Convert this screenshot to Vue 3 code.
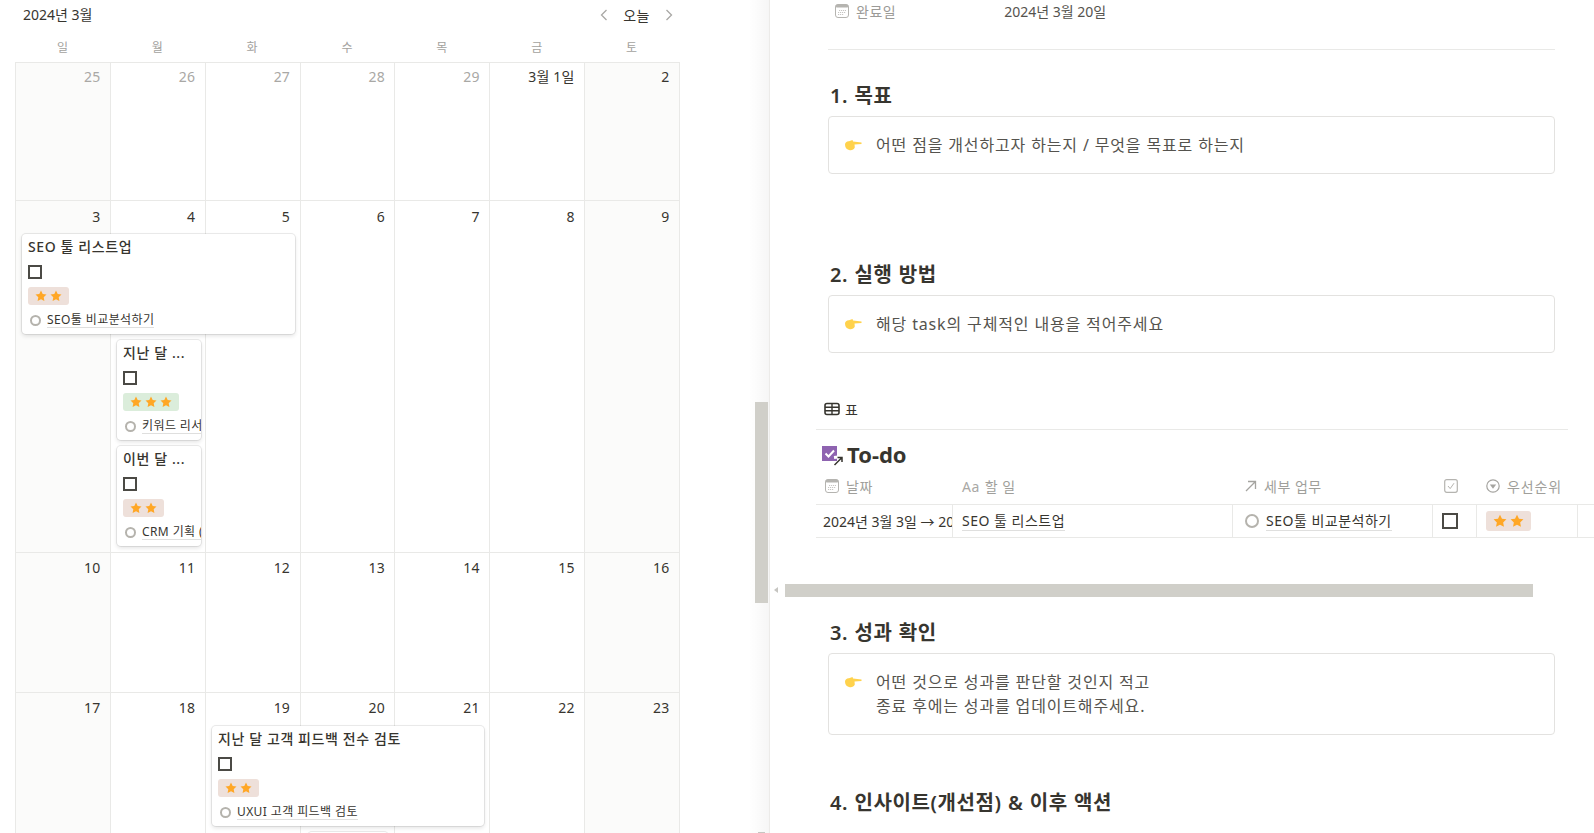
<script setup>
const weekdays = ['일', '월', '화', '수', '목', '금', '토']
const days = [
  ['25', 1], ['26', 1], ['27', 1], ['28', 1], ['29', 1], ['3월 1일', 0], ['2', 0],
  ['3', 0], ['4', 0], ['5', 0], ['6', 0], ['7', 0], ['8', 0], ['9', 0],
  ['10', 0], ['11', 0], ['12', 0], ['13', 0], ['14', 0], ['15', 0], ['16', 0],
  ['17', 0], ['18', 0], ['19', 0], ['20', 0], ['21', 0], ['22', 0], ['23', 0]
].map(([label, muted], i) => ({
  label,
  muted: !!muted,
  weekend: i % 7 === 0 || i % 7 === 6,
  first: i < 7,
  second: i >= 7 && i < 14
}))

const cards = [
  { title: 'SEO 툴 리스트업', stars: 2, rel: 'SEO툴 비교분석하기', x: 22, y: 234, w: 273 },
  { title: '지난 달 ...', stars: 3, rel: '키워드 리서치', x: 117, y: 340, w: 84 },
  { title: '이번 달 ...', stars: 2, rel: 'CRM 기획 (', x: 117, y: 446, w: 84 },
  { title: '지난 달 고객 피드백 전수 검토', stars: 2, rel: 'UXUI 고객 피드백 검토', x: 212, y: 726, w: 272 }
]
const star = '6,0.6 7.7,4.1 11.5,4.6 8.7,7.2 9.4,11 6,9.2 2.6,11 3.3,7.2 0.5,4.6 4.3,4.1'
</script>

<template>
  <div class="page">
    <section class="left">
      <header class="cal-head">
        <span class="cal-title">2024년 3월</span>
        <nav class="cal-nav">
          <svg class="chev" viewBox="0 0 8 14" width="8" height="14"><path d="M6.5 2 1.5 7l5 5" /></svg>
          <span class="today">오늘</span>
          <svg class="chev" viewBox="0 0 8 14" width="8" height="14"><path d="M1.5 2l5 5-5 5" /></svg>
        </nav>
      </header>
      <div class="weekdays">
        <span v-for="d in weekdays" :key="d">{{ d }}</span>
      </div>
      <div class="grid">
        <div
          v-for="d in days"
          :key="d.label"
          class="cell"
          :class="{ weekend: d.weekend, muted: d.muted, first: d.first, second: d.second }"
        >{{ d.label }}</div>
      </div>

      <article
        v-for="c in cards"
        :key="c.x + '-' + c.y"
        class="card"
        :style="{ left: c.x + 'px', top: c.y + 'px', width: c.w + 'px' }"
      >
        <div class="card-title">{{ c.title }}</div>
        <span class="box small"></span>
        <span class="pill small" :class="{ green: c.stars === 3 }">
          <svg v-for="n in c.stars" :key="n" viewBox="0 0 12 12" width="12" height="12"><polygon :points="star" /></svg>
        </span>
        <div class="rel">
          <span class="ring"></span>
          <span class="rel-text">{{ c.rel }}</span>
        </div>
      </article>
      <div class="card stub"></div>

      <div class="shade"></div>
      <div class="vbar"></div>
      <div class="vbar-end"></div>
    </section>

    <main class="right">
      <div class="prop">
        <svg class="gray-ico" viewBox="0 0 14 14" width="14" height="14">
          <rect x="0.5" y="0.5" width="13" height="13" rx="2.5" fill="#fff" stroke="#b5b4b0" />
          <rect x="0.5" y="0.5" width="13" height="3" rx="1.5" fill="#b5b4b0" />
          <path d="M4 6.5h7M3 8.5h8M3 10.5h6" stroke="#c6c5c2" stroke-dasharray="1.2 .8" />
        </svg>
        <span class="prop-name">완료일</span>
        <span class="prop-val">2024년 3월 20일</span>
      </div>
      <hr class="rule" />

      <h2 class="h h1">1. 목표</h2>
      <div class="callout one">
        <svg class="hand" viewBox="0 0 18 14" width="18" height="14"><path d="M1 6.5C1 4.5 3 3 5 3.2L8.5 2 9 3.5 17.5 4.4V6L10.5 6.4 10.8 9.5C9.8 12 7.5 12.5 5 12 2.5 11.5 1 9.5 1 6.5Z" fill="#ffd24c" /></svg>
        <p>어떤 점을 개선하고자 하는지 / 무엇을 목표로 하는지</p>
      </div>

      <h2 class="h h2">2. 실행 방법</h2>
      <div class="callout one">
        <svg class="hand" viewBox="0 0 18 14" width="18" height="14"><path d="M1 6.5C1 4.5 3 3 5 3.2L8.5 2 9 3.5 17.5 4.4V6L10.5 6.4 10.8 9.5C9.8 12 7.5 12.5 5 12 2.5 11.5 1 9.5 1 6.5Z" fill="#ffd24c" /></svg>
        <p>해당 task의 구체적인 내용을 적어주세요</p>
      </div>

      <div class="db">
        <div class="tabs">
          <svg viewBox="0 0 16 14" width="16" height="14">
            <rect x="1" y="1.5" width="14" height="11" rx="2" fill="none" stroke="#37352f" stroke-width="1.6" />
            <path d="M1 5.2h14M1 8.8h14M8 1.5v11" stroke="#37352f" stroke-width="1.4" />
          </svg>
          <span>표</span>
        </div>
        <div class="db-title">
          <svg viewBox="0 0 21 20" width="21" height="20">
            <rect x="0" y="0" width="15" height="15" fill="#8e63b0" />
            <path d="M3.5 7.5 6.5 10.5 12 4.5" fill="none" stroke="#fff" stroke-width="2" />
            <path d="M12 11.5 16 11" stroke="#fff" stroke-width="3" />
            <path d="M12.5 19 20 11.5M15.5 11.5H20V16" fill="none" stroke="#37352f" stroke-width="1.5" />
          </svg>
          <span>To-do</span>
        </div>
        <div class="tr head">
          <div class="c c1">
            <svg viewBox="0 0 14 14" width="14" height="14">
              <rect x="0.5" y="0.5" width="13" height="13" rx="2.5" fill="#fff" stroke="#b5b4b0" />
              <rect x="0.5" y="0.5" width="13" height="3" rx="1.5" fill="#b5b4b0" />
              <path d="M4 6.5h7M3 8.5h8M3 10.5h6" stroke="#c6c5c2" stroke-dasharray="1.2 .8" />
            </svg>
            <span>날짜</span>
          </div>
          <div class="c c2"><span class="aa">Aa</span><span>할 일</span></div>
          <div class="c c3">
            <svg viewBox="0 0 12 12" width="12" height="12"><path d="M1 11 10.5 1.5M3 1.5h7.5V9" fill="none" stroke="#a5a4a0" stroke-width="1.3" /></svg>
            <span>세부 업무</span>
          </div>
          <div class="c c4">
            <svg viewBox="0 0 14 14" width="14" height="14"><rect x="0.7" y="0.7" width="12.6" height="12.6" rx="2" fill="none" stroke="#b5b4b0" stroke-width="1.2" /><path d="M4 7 6.2 9.6 10 4.2" fill="none" stroke="#b5b4b0" /></svg>
          </div>
          <div class="c c5">
            <svg viewBox="0 0 14 14" width="14" height="14"><circle cx="7" cy="7" r="6.2" fill="none" stroke="#a5a4a0" stroke-width="1.2" /><path d="M3.8 5.5h6.4L7 9.8z" fill="#a5a4a0" /></svg>
            <span>우선순위</span>
          </div>
          <div class="c c6"></div>
        </div>
        <div class="tr body">
          <div class="c c1 date">2024년 3월 3일 → 20</div>
          <div class="c c2"><span class="link">SEO 툴 리스트업</span></div>
          <div class="c c3"><span class="ring big"></span><span class="link">SEO툴 비교분석하기</span></div>
          <div class="c c4"><span class="box"></span></div>
          <div class="c c5">
            <span class="pill">
              <svg v-for="n in 2" :key="n" viewBox="0 0 12 12" width="14" height="14"><polygon :points="star" /></svg>
            </span>
          </div>
          <div class="c c6"></div>
        </div>
      </div>

      <h2 class="h h3">3. 성과 확인</h2>
      <div class="callout two">
        <svg class="hand" viewBox="0 0 18 14" width="18" height="14"><path d="M1 6.5C1 4.5 3 3 5 3.2L8.5 2 9 3.5 17.5 4.4V6L10.5 6.4 10.8 9.5C9.8 12 7.5 12.5 5 12 2.5 11.5 1 9.5 1 6.5Z" fill="#ffd24c" /></svg>
        <p>어떤 것으로 성과를 판단할 것인지 적고<br />종료 후에는 성과를 업데이트해주세요.</p>
      </div>

      <h2 class="h h4">4. 인사이트(개선점) &amp; 이후 액션</h2>

      <div class="hbar-arrow"></div>
      <div class="hbar"></div>
    </main>
  </div>
</template>

<style>
html, body { margin: 0; background: #fff; overflow: hidden; }
</style>

<style scoped>
.page {
  display: flex;
  width: 1594px;
  height: 833px;
  overflow: hidden;
  color: #37352f;
  font-family: "Noto Sans", "Noto Sans CJK KR", sans-serif;
  font-size: 14px;
}
.left {
  position: relative;
  flex: 0 0 770px;
  height: 833px;
  overflow: hidden;
  border-right: 1px solid #ecebe9;
  box-sizing: border-box;
  padding-left: 15px;
}
.cal-head {
  display: flex;
  justify-content: space-between;
  align-items: center;
  width: 664px;
  height: 30px;
}
.cal-title { margin-left: 8px; font-size: 14px; line-height: 20px; }
.cal-nav { display: flex; align-items: center; gap: 15px; margin-right: 6px; }
.today { font-size: 14px; letter-spacing: .5px; }
.chev { fill: none; stroke: #a9a8a5; stroke-width: 1.3; }
.weekdays {
  display: grid;
  grid-template-columns: repeat(7, 1fr);
  box-sizing: border-box;
  width: 664px;
  height: 32px;
  padding-top: 2px;
  align-items: center;
  text-align: center;
  font-size: 12px;
  color: #a3a29e;
}
.grid {
  display: grid;
  grid-template-columns: repeat(7, 1fr);
  grid-template-rows: 138px 352px 140px 200px;
  width: 664px;
  border-right: 1px solid #e9e9e7;
}
.cell {
  border-left: 1px solid #e9e9e7;
  border-top: 1px solid #e9e9e7;
  box-sizing: border-box;
  padding: 5px 9.5px 0 0;
  text-align: right;
  line-height: 20px;
  font-size: 14px;
  letter-spacing: .2px;
  color: #37352f;
}
.cell.first { padding-top: 4px; }
.cell.second { padding-top: 6px; }
.cell.weekend { background: #fbfbfa; }
.cell.muted { color: #a9a8a5; }
.card {
  position: absolute;
  box-sizing: border-box;
  height: 100px;
  padding: 3px 6px 0;
  overflow: hidden;
  background: #fff;
  border-radius: 4px;
  box-shadow: 0 0 0 1px rgba(15, 15, 15, .08), 0 2px 4px rgba(15, 15, 15, .12);
}
.card.stub { left: 308px; top: 832px; width: 80px; }
.card-title {
  font-size: 14px;
  font-weight: 500;
  line-height: 20px;
  letter-spacing: .6px;
  white-space: nowrap;
}
.box {
  display: block;
  box-sizing: border-box;
  width: 16px;
  height: 16px;
  border: 2px solid #4b4a45;
}
.box.small { width: 14px; height: 14px; margin-top: 8px; }
.pill {
  display: inline-flex;
  align-items: center;
  gap: 3px;
  box-sizing: border-box;
  height: 20px;
  padding: 0 7px;
  background: #eee0da;
  border-radius: 3px;
}
.pill svg { fill: #ffa726; display: block; }
.pill.small {
  display: flex;
  width: fit-content;
  height: 18px;
  margin-top: 8px;
  padding: 0 7px;
}
.pill.green { background: #dbeddb; }
.rel {
  display: flex;
  align-items: center;
  gap: 6px;
  height: 20px;
  margin-top: 5px;
  padding-left: 2px;
  white-space: nowrap;
  font-size: 12px;
  letter-spacing: .4px;
}
.ring {
  flex: none;
  box-sizing: border-box;
  width: 11px;
  height: 11px;
  border: 2px solid #b5b3ad;
  border-radius: 50%;
}
.ring.big { width: 14px; height: 14px; }
.rel-text { border-bottom: 1px solid rgba(55, 53, 47, .16); line-height: 15px; }
.shade {
  position: absolute;
  top: 0;
  right: 0;
  bottom: 0;
  width: 20px;
  background: linear-gradient(to right, rgba(0, 0, 0, 0), rgba(0, 0, 0, .035));
}
.vbar {
  position: absolute;
  left: 755px;
  top: 402px;
  width: 13px;
  height: 201px;
  background: #d0cfc9;
}
.vbar-end {
  position: absolute;
  left: 758px;
  top: 832px;
  width: 7px;
  height: 1px;
  background: #c6c5c1;
}

.right {
  position: relative;
  flex: 1;
  min-width: 0;
  padding-left: 58px;
  overflow: hidden;
}
.prop {
  display: flex;
  align-items: center;
  height: 22px;
  margin-bottom: 27px;
  padding-left: 7px;
  color: #9b9a97;
}
.prop-name { margin-left: 7px; font-size: 14px; letter-spacing: .5px; }
.prop-val { margin-left: 108px; color: #55534e; font-size: 14px; }
.rule {
  box-sizing: border-box;
  width: 727px;
  height: 1px;
  margin: 0;
  border: 0;
  background: #e9e9e7;
}
.h {
  margin: 0;
  padding-left: 2px;
  font-size: 20px;
  line-height: 30px;
  font-weight: 600;
  letter-spacing: .6px;
  word-spacing: .5px;
  color: #37352f;
}
.h1 { margin-top: 31px; }
.h2 { margin-top: 86px; }
.h3 { margin-top: 80px; }
.h4 { margin-top: 53px; }
.callout {
  display: flex;
  gap: 14px;
  box-sizing: border-box;
  width: 727px;
  padding-left: 15px;
  border: 1px solid #e3e2e0;
  border-radius: 4px;
}
.callout p { margin: 0; font-size: 16px; line-height: 24px; letter-spacing: .85px; color: #55534e; }
.callout.one { height: 58px; margin-top: 5px; align-items: center; }
.callout.two { height: 82px; margin-top: 5px; padding-top: 16px; }
.callout.two .hand { margin-top: 5px; }
.hand { flex: none; }
.db { margin: 44px 0 0 -12px; }
.tabs {
  display: flex;
  align-items: center;
  gap: 5px;
  width: 752px;
  padding-left: 8px;
  padding-bottom: 8px;
  box-sizing: border-box;
  height: 33px;
  border-bottom: 1px solid #e9e9e7;
  font-size: 14px;
}
.db-title {
  display: flex;
  align-items: center;
  gap: 4px;
  height: 30px;
  margin-top: 10px;
  padding-left: 6px;
  font-size: 22px;
  font-weight: 700;
}
.db-title svg { margin-top: 1px; }
.db-title span { margin-bottom: 2px; }
.tr { display: flex; white-space: nowrap; }
.tr.head {
  height: 35px;
  box-sizing: border-box;
  padding-bottom: 2px;
  border-bottom: 1px solid #e9e9e7;
  color: #a09f9b;
  letter-spacing: .5px;
}
.tr.body {
  height: 33px;
  box-sizing: border-box;
  padding-bottom: 1px;
  border-bottom: 1px solid #e9e9e7;
}
.c {
  display: flex;
  align-items: center;
  box-sizing: border-box;
  overflow: hidden;
  flex: none;
}
.c1 { width: 137px; padding-left: 9px; gap: 7px; }
.c2 { width: 280px; padding-left: 9px; gap: 5px; }
.c3 { width: 200px; padding-left: 12px; gap: 7px; }
.c4 { width: 44px; padding-left: 9px; }
.c5 { width: 101px; padding-left: 9px; gap: 7px; }
.head .c5 { letter-spacing: .9px; }
.c6 { width: 40px; }
.body .c { border-right: 1px solid #e9e9e7; margin-bottom: -1px; }
.body .c6 { border-right: 0; }
.head .c4 { padding-left: 11px; }
.date { padding-left: 7px; color: #37352f; }
.aa { color: #a9a8a5; font-size: 14px; }
.link {
  font-size: 14px;
  line-height: 19px;
  letter-spacing: .5px;
  border-bottom: 1px solid rgba(55, 53, 47, .16);
}
.hbar {
  position: absolute;
  left: 15px;
  top: 584px;
  width: 748px;
  height: 13px;
  background: #d0cfc9;
}
.hbar-arrow {
  position: absolute;
  left: 4px;
  top: 587px;
  width: 0;
  height: 0;
  border: 3.5px solid transparent;
  border-left-width: 0;
  border-right: 4px solid #c6c5c1;
}
</style>
